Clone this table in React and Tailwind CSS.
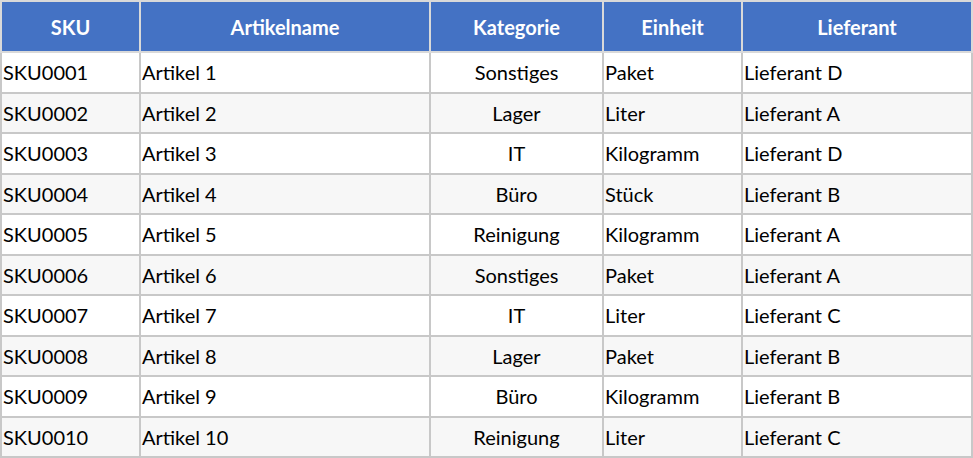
import React from "react";

const rows = [
  ["SKU0001", "Artikel 1", "Sonstiges", "Paket", "Lieferant D"],
  ["SKU0002", "Artikel 2", "Lager", "Liter", "Lieferant A"],
  ["SKU0003", "Artikel 3", "IT", "Kilogramm", "Lieferant D"],
  ["SKU0004", "Artikel 4", "Büro", "Stück", "Lieferant B"],
  ["SKU0005", "Artikel 5", "Reinigung", "Kilogramm", "Lieferant A"],
  ["SKU0006", "Artikel 6", "Sonstiges", "Paket", "Lieferant A"],
  ["SKU0007", "Artikel 7", "IT", "Liter", "Lieferant C"],
  ["SKU0008", "Artikel 8", "Lager", "Paket", "Lieferant B"],
  ["SKU0009", "Artikel 9", "Büro", "Kilogramm", "Lieferant B"],
  ["SKU0010", "Artikel 10", "Reinigung", "Liter", "Lieferant C"],
];

const headers = ["SKU", "Artikelname", "Kategorie", "Einheit", "Lieferant"];
const widths = ["w-[139px]", "w-[290px]", "w-[173px]", "w-[139px]", "w-[230px]"];

export default function App() {
  return (
    <div className="w-[973px] h-[458px] bg-white" style={{ fontFamily: "Lato, 'Noto Sans', sans-serif" }}>
      <table className="w-[973px] border-collapse table-fixed text-[20px] text-black">
        <colgroup>
          {widths.map((w, i) => (
            <col key={i} className={w} />
          ))}
        </colgroup>
        <thead>
          <tr className="h-[51px] bg-[#4472c4]">
            {headers.map((h) => (
              <th key={h} className="border-2 border-[#d9d9d9] text-white font-bold text-center px-1 leading-none">
                {h}
              </th>
            ))}
          </tr>
        </thead>
        <tbody>
          {rows.map((r, i) => (
            <tr key={i} className={`h-[40.5px] ${i % 2 === 1 ? "bg-[#f7f7f7]" : "bg-white"}`}>
              {r.map((c, j) => (
                <td
                  key={j}
                  className={`border-2 border-[#c8c8c8] px-[1px] leading-none ${j === 2 ? "text-center" : "text-left"}`}
                >
                  {c}
                </td>
              ))}
            </tr>
          ))}
        </tbody>
      </table>
    </div>
  );
}
